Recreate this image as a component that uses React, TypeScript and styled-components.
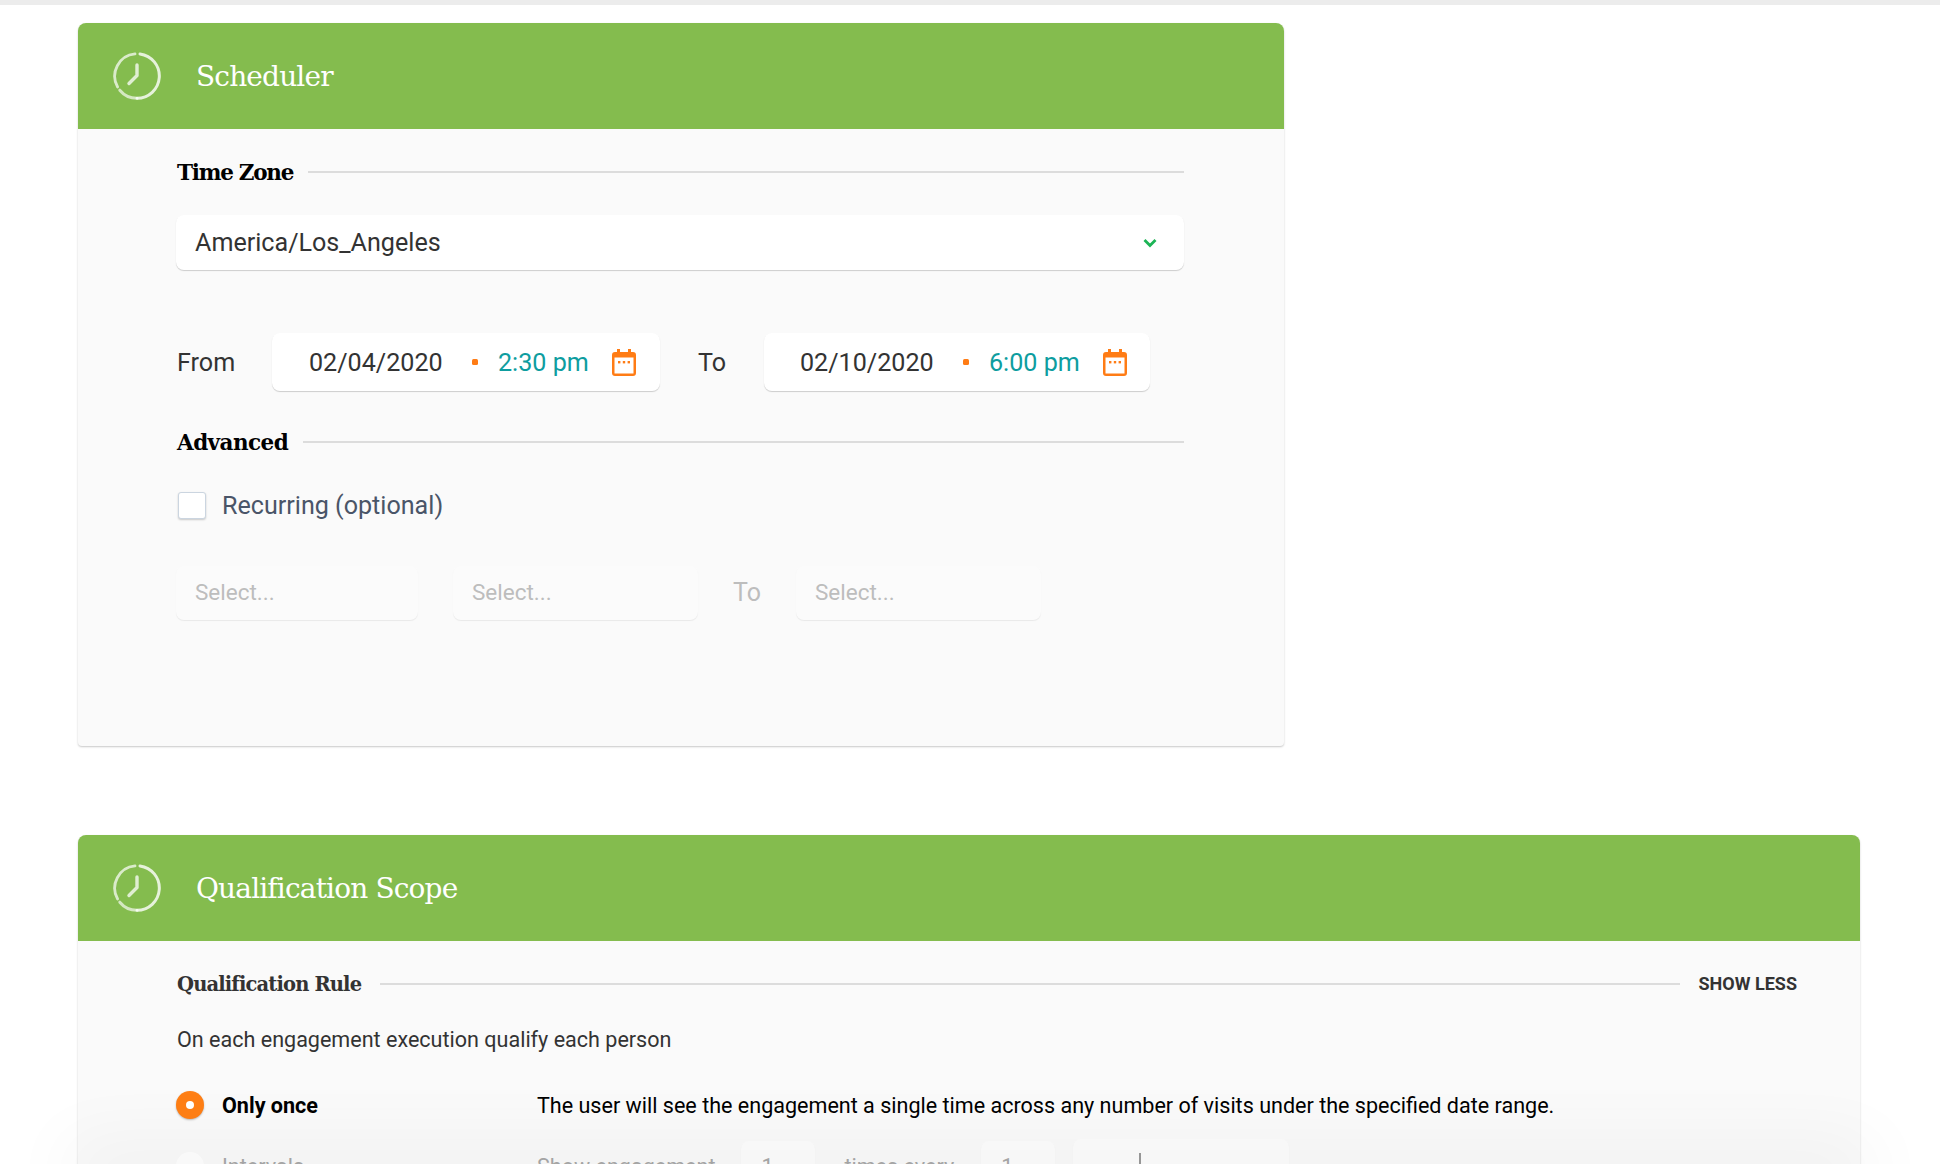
import React from 'react';
import styled, { createGlobalStyle } from 'styled-components';

const GlobalStyle = createGlobalStyle`
  html, body {
    margin: 0;
    padding: 0;
    background: #fff;
    overflow: hidden;
  }
  * { box-sizing: border-box; }
`;

const SLAB = '"DejaVu Serif", "Liberation Serif", serif';
const SANS = 'Roboto, "Liberation Sans", sans-serif';

const Page = styled.div`
  position: relative;
  width: 1940px;
  height: 1164px;
  overflow: hidden;
  border-top: 5px solid #ececec;
  padding: 18px 0 0 78px;
  font-family: ${SANS};
`;

const Panel = styled.section<{ $width: number; $height?: number }>`
  width: ${(p) => p.$width}px;
  height: ${(p) => (p.$height ? `${p.$height}px` : 'auto')};
  background: #fafafa;
  border-radius: 8px 8px 4px 4px;
  box-shadow: 0 1px 2px rgba(0, 0, 0, 0.22);
  margin-bottom: 89px;
`;

const PanelHeader = styled.header`
  height: 106px;
  background: #84bc4e;
  border-radius: 8px 8px 0 0;
  display: flex;
  align-items: center;
  padding-left: 35px;
  gap: 35px;
`;

const PanelTitle = styled.h2`
  margin: 0;
  font-family: ${SLAB};
  font-weight: 400;
  font-size: 28px;
  letter-spacing: -0.85px;
  color: #fff;
`;

const PanelBody = styled.div<{ $right: number }>`
  padding: 28px ${(p) => p.$right}px 0 98px;
  display: flex;
  flex-direction: column;
`;

const SectionHead = styled.div<{ $gap: number; $top?: number }>`
  display: flex;
  align-items: center;
  gap: ${(p) => p.$gap}px;
  height: 30px;
  margin-top: ${(p) => p.$top ?? 0}px;
`;

const SectionLabel = styled.span<{ $muted?: boolean; $spacing: number }>`
  margin-left: 1px;
  font-family: ${SLAB};
  font-weight: 700;
  font-size: ${(p) => (p.$muted ? 19.5 : 21.5)}px;
  letter-spacing: ${(p) => p.$spacing}px;
  color: ${(p) => (p.$muted ? '#333' : '#000')};
  white-space: nowrap;
`;

const Rule = styled.div`
  flex: 1;
  height: 2px;
  background: #dcdcdc;
`;

const ZoneSelect = styled.div`
  margin-top: 28px;
  height: 55px;
  background: #fff;
  border-radius: 8px;
  box-shadow: 0 1px 1px rgba(0, 0, 0, 0.18);
  display: flex;
  align-items: center;
  justify-content: space-between;
  padding: 0 27px 0 19px;
  font-size: 25.12px;
  color: #333;
`;

const DateRow = styled.div`
  margin-top: 63px;
  display: flex;
  align-items: center;
  font-size: 25.12px;
  color: #333;
`;

const RowLabel = styled.span<{ $width: number; $pad?: number }>`
  width: ${(p) => p.$width}px;
  padding-left: ${(p) => p.$pad ?? 0}px;
`;

const DateBox = styled.div<{ $width: number; $pad: number }>`
  width: ${(p) => p.$width}px;
  height: 58px;
  background: #fff;
  border-radius: 8px;
  box-shadow: 0 1px 1px rgba(0, 0, 0, 0.18);
  display: flex;
  align-items: center;
  padding-left: ${(p) => p.$pad}px;
`;

const DateValue = styled.span`
  width: 134px;
`;

const Dot = styled.span`
  width: 6px;
  height: 6px;
  margin: 0 20px 0 29px;
  border-radius: 1.5px;
  background: #ff7c15;
`;

const TimeValue = styled.span`
  width: 114px;
  color: #0e9d9f;
`;

const Recurring = styled.label`
  margin-top: 34px;
  margin-left: 2px;
  display: flex;
  align-items: center;
  gap: 16px;
  font-size: 25.12px;
  color: #4a5568;
`;

const Checkbox = styled.span`
  width: 28px;
  height: 27px;
  background: #fff;
  border: 1px solid #cbd5e0;
  border-radius: 3px;
  box-shadow: 0 1px 2px rgba(0, 0, 0, 0.2);
`;

const DisabledRow = styled.div`
  margin-top: 46px;
  display: flex;
  align-items: center;
  font-size: 22.5px;
  color: #bdbdbd;
`;

const DisabledSelect = styled.div<{ $width: number; $after: number }>`
  width: ${(p) => p.$width}px;
  height: 54px;
  margin-right: ${(p) => p.$after}px;
  padding: 0 0 2px 19px;
  display: flex;
  align-items: center;
  background: #fbfbfb;
  border-radius: 8px;
  box-shadow: 0 1px 1px rgba(0, 0, 0, 0.07);
`;

const DisabledTo = styled.span`
  width: 63px;
  padding-bottom: 2px;
  font-size: 25px;
`;

const ShowLess = styled.span`
  padding-bottom: 2px;
  margin-right: -1px;
  font-size: 18px;
  font-weight: 700;
  color: #333;
`;

const Intro = styled.p`
  margin: 26px 0 0 1px;
  font-size: 21.55px;
  line-height: 30px;
  color: #333;
`;

const RuleRow = styled.div<{ $top: number; $faded?: boolean }>`
  margin-top: ${(p) => p.$top}px;
  display: flex;
  align-items: center;
  font-size: 21.55px;
  color: ${(p) => (p.$faded ? '#a8a8a8' : '#000')};
`;

const RadioWrap = styled.div<{ $faded?: boolean }>`
  width: 361px;
  display: flex;
  align-items: center;
  gap: 18px;
  font-weight: ${(p) => (p.$faded ? 400 : 700)};
`;

const Radio = styled.span<{ $on?: boolean }>`
  width: 28px;
  height: 28px;
  border-radius: 50%;
  display: flex;
  align-items: center;
  justify-content: center;
  background: ${(p) => (p.$on ? '#ff7f15' : '#fff')};
  box-shadow: ${(p) => (p.$on ? '0 1px 2px rgba(0, 0, 0, 0.25)' : 'none')};
  &::after {
    content: '';
    width: 8px;
    height: 8px;
    border-radius: 50%;
    background: ${(p) => (p.$on ? '#fff' : 'transparent')};
  }
`;

const SmallField = styled.span<{ $width: number; $left: number; $right?: number; $height: number }>`
  width: ${(p) => p.$width}px;
  height: ${(p) => p.$height}px;
  margin: 0 ${(p) => p.$right ?? 0}px 0 ${(p) => p.$left}px;
  padding-left: 20px;
  display: flex;
  align-items: center;
  background: #fdfdfd;
  border-radius: 8px;
  box-shadow: 0 1px 1px rgba(0, 0, 0, 0.07);
`;

const SelectTick = styled.span`
  width: 2px;
  height: 26px;
  margin-left: 46px;
  background: #9a9a9a;
`;

// soft shadow of a bar that sits just under the visible area
const BottomShade = styled.div`
  position: absolute;
  left: 90px;
  right: 90px;
  bottom: -12px;
  height: 12px;
  pointer-events: none;
  box-shadow: 0 0 70px 24px rgba(0, 0, 0, 0.045);
`;

const ClockIcon = () => (
  <svg width="48" height="48" viewBox="0 0 48 48" fill="none" stroke="#fff" strokeLinecap="round">
    <path d="M27 1.9A22.3 22.3 0 0 1 24 46.3" strokeWidth="3" opacity="0.8" />
    <path d="M24 46.3A22.3 22.3 0 0 1 6.8 38.2" strokeWidth="3" opacity="0.65" />
    <path d="M4.6 35A22.3 22.3 0 0 1 22 1.9" strokeWidth="2.8" opacity="0.7" />
    <path d="M24 13V23.5L16 31.5" strokeWidth="3.4" opacity="0.75" strokeLinejoin="round" />
  </svg>
);

const Chevron = () => (
  <svg width="14" height="10" viewBox="0 0 14 10" fill="none" stroke="#1cb455" strokeWidth="2.8">
    <path d="M1.5 2L7 7.5L12.5 2" />
  </svg>
);

const CalendarIcon = () => (
  <svg width="24" height="27" viewBox="0 0 24 27">
    <path
      fill="#ff7c15"
      d="M5 0h3v3h8V0h3v3h2a3 3 0 0 1 3 3v18a3 3 0 0 1-3 3H3a3 3 0 0 1-3-3V6a3 3 0 0 1 3-3h2z"
    />
    <rect x="2.5" y="8.5" width="19" height="16" fill="#fff" />
    <rect x="6" y="12" width="2.4" height="2.4" fill="#ff7c15" />
    <rect x="10.8" y="12" width="2.4" height="2.4" fill="#ff7c15" />
    <rect x="15.6" y="12" width="2.4" height="2.4" fill="#ff7c15" />
  </svg>
);

export default function App() {
  return (
    <Page>
      <GlobalStyle />
      <Panel $width={1206} $height={723}>
        <PanelHeader>
          <ClockIcon />
          <PanelTitle>Scheduler</PanelTitle>
        </PanelHeader>
        <PanelBody $right={100}>
          <SectionHead $gap={15}>
            <SectionLabel $spacing={-1.25}>Time Zone</SectionLabel>
            <Rule />
          </SectionHead>
          <ZoneSelect>
            America/Los_Angeles
            <Chevron />
          </ZoneSelect>
          <DateRow>
            <RowLabel $width={96} $pad={1}>From</RowLabel>
            <DateBox $width={388} $pad={37}>
              <DateValue>02/04/2020</DateValue>
              <Dot />
              <TimeValue>2:30 pm</TimeValue>
              <CalendarIcon />
            </DateBox>
            <RowLabel $width={104} $pad={38}>To</RowLabel>
            <DateBox $width={386} $pad={36}>
              <DateValue>02/10/2020</DateValue>
              <Dot />
              <TimeValue>6:00 pm</TimeValue>
              <CalendarIcon />
            </DateBox>
          </DateRow>
          <SectionHead $gap={15} $top={36}>
            <SectionLabel $spacing={-0.55}>Advanced</SectionLabel>
            <Rule />
          </SectionHead>
          <Recurring>
            <Checkbox />
            Recurring (optional)
          </Recurring>
          <DisabledRow>
            <DisabledSelect $width={242} $after={35}>Select...</DisabledSelect>
            <DisabledSelect $width={245} $after={35}>Select...</DisabledSelect>
            <DisabledTo>To</DisabledTo>
            <DisabledSelect $width={245} $after={0}>Select...</DisabledSelect>
          </DisabledRow>
        </PanelBody>
      </Panel>
      <Panel $width={1782}>
        <PanelHeader>
          <ClockIcon />
          <PanelTitle>Qualification Scope</PanelTitle>
        </PanelHeader>
        <PanelBody $right={64}>
          <SectionHead $gap={19}>
            <SectionLabel $muted $spacing={-0.85}>Qualification Rule</SectionLabel>
            <Rule />
            <ShowLess>SHOW LESS</ShowLess>
          </SectionHead>
          <Intro>On each engagement execution qualify each person</Intro>
          <RuleRow $top={36}>
            <RadioWrap>
              <Radio $on />
              Only once
            </RadioWrap>
            The user will see the engagement a single time across any number of visits under the specified date range.
          </RuleRow>
          <RuleRow $top={20} $faded>
            <RadioWrap $faded>
              <Radio />
              Intervals
            </RadioWrap>
            Show engagement
            <SmallField $width={74} $left={26} $right={29} $height={50}>1</SmallField>
            times every
            <SmallField $width={74} $left={27} $height={50}>1</SmallField>
            <SmallField $width={216} $left={18} $height={54}>
              <SelectTick />
            </SmallField>
          </RuleRow>
        </PanelBody>
      </Panel>
      <BottomShade />
    </Page>
  );
}
